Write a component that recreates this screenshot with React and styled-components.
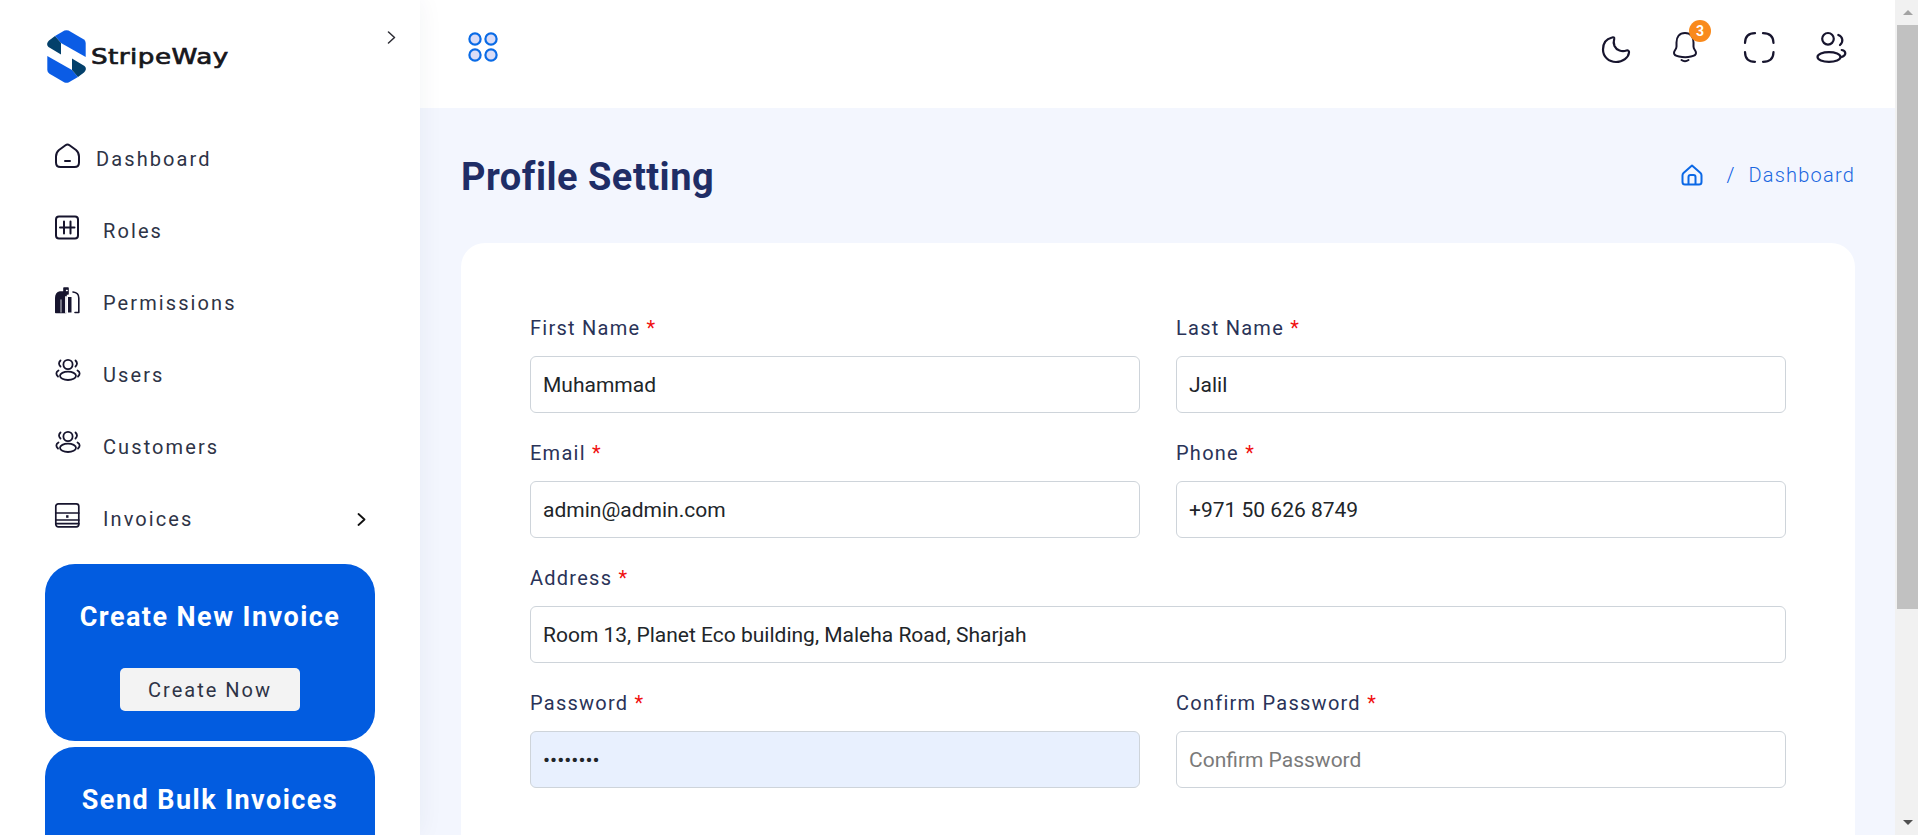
import React from "react";
import styled, { createGlobalStyle } from "styled-components";

const GlobalStyle = createGlobalStyle`
  html, body { margin: 0; padding: 0; height: 100%; overflow: hidden; background: #fff; }
  * { box-sizing: border-box; }
  body { font-family: Roboto, "Liberation Sans", sans-serif; }
`;

const Page = styled.div`
  display: flex;
  width: 1918px;
  height: 835px;
  overflow: hidden;
`;

const Sidebar = styled.aside`
  flex: 0 0 420px;
  height: 835px;
  background: #fff;
  box-shadow: 0 0 24px rgba(40, 50, 90, 0.06);
  position: relative;
  z-index: 2;
  overflow: hidden;
`;

const LogoRow = styled.div`
  display: flex;
  justify-content: space-between;
  height: 123px;
  padding: 30px 24px 0 47px;
`;

const Logo = styled.div`
  display: flex;
  align-items: flex-start;
  gap: 5px;
`;

const LogoText = styled.span`
  font-family: "DejaVu Sans", sans-serif;
  font-weight: 400;
  font-size: 21px;
  line-height: 24px;
  margin-top: 15px;
  color: #17171c;
  letter-spacing: 0.4px;
  -webkit-text-stroke: 0.7px #17171c;
  display: inline-block;
  transform: scaleX(1.245);
  transform-origin: left center;
`;

const Collapse = styled.span`
  display: block;
  margin-top: 1px;
`;

const Nav = styled.nav`
  display: flex;
  flex-direction: column;
  padding: 0 54px 0 55px;
`;

const NavItem = styled.a`
  display: flex;
  align-items: center;
  height: 72px;
  gap: ${(p) => p.$gap || 24}px;
  color: #2e3346;
  font-size: 20px;
  letter-spacing: 2.1px;
`;

const NavIcon = styled.span`
  display: block;
  width: 24px;
  height: 26px;
  margin-bottom: 6px;
  flex: none;
`;

const NavLabel = styled.span`
  flex: 1;
`;

const Promo = styled.div`
  margin: ${(p) => p.$top}px 0 0 45px;
  width: 330px;
  height: 177px;
  border-radius: 30px;
  background: #025ce0;
  padding-top: 37px;
  display: flex;
  flex-direction: column;
  align-items: center;
`;

const PromoTitle = styled.div`
  color: #fff;
  font-weight: 700;
  font-size: 27px;
  line-height: 32px;
  letter-spacing: 1.45px;
`;

const PromoButton = styled.button`
  margin-top: 35px;
  width: 180px;
  height: 43px;
  border: 0;
  border-radius: 5px;
  background: #f3f3f3;
  color: #2e3346;
  font-family: inherit;
  font-size: 20px;
  letter-spacing: 2px;
`;

const Main = styled.main`
  flex: 1;
  height: 835px;
  background: #f3f6fe;
  overflow: hidden;
`;

const Topbar = styled.header`
  height: 108px;
  background: #fff;
  display: flex;
  align-items: flex-start;
  justify-content: space-between;
  padding: 32px 48px 0 48px;
`;

const TopActions = styled.div`
  display: flex;
  align-items: flex-start;
  gap: 40px;
`;

const TopAction = styled.span`
  position: relative;
  display: block;
  width: 32px;
  height: 32px;
`;

const Badge = styled.span`
  position: absolute;
  top: -12px;
  left: 18px;
  width: 22px;
  height: 22px;
  border-radius: 50%;
  background: #f98a1c;
  color: #fff;
  font-size: 14px;
  font-weight: 700;
  line-height: 22px;
  text-align: center;
`;

const Content = styled.div`
  padding: 0 40px 0 41px;
`;

const TitleRow = styled.div`
  height: 135px;
  display: flex;
  align-items: flex-start;
  justify-content: space-between;
`;

const Title = styled.h1`
  margin: 46px 0 0;
  font-size: 38px;
  line-height: 46px;
  font-weight: 700;
  color: #1f2d66;
  letter-spacing: 0.5px;
`;

const Crumbs = styled.div`
  display: flex;
  align-items: center;
  margin-top: 55px;
  color: #1a66e0;
  font-size: 20px;
  font-weight: 300;
  letter-spacing: 1.2px;
  line-height: 24px;
`;

const CrumbSep = styled.span`
  margin: 0 13px 0 23px;
  color: #0b5ce5;
`;

const Card = styled.section`
  background: #fff;
  border-radius: 24px;
  padding: 71px 69px 80px;
  height: 700px;
`;

const Form = styled.form`
  display: grid;
  grid-template-columns: 610px 610px;
  column-gap: 36px;
  row-gap: 26px;
`;

const Field = styled.div`
  grid-column: ${(p) => (p.$wide ? "1 / -1" : "auto")};
`;

const Label = styled.label`
  display: block;
  height: 29px;
  margin-bottom: 13px;
  font-size: 20px;
  line-height: 29px;
  letter-spacing: 1.25px;
  color: #2a3358;
  font-weight: 400;
`;

const Req = styled.span`
  color: #f01010;
`;

const Input = styled.input`
  display: block;
  width: 100%;
  height: 57px;
  padding: 0 12px;
  border: 1px solid #ced4da;
  border-radius: 6px;
  background: ${(p) => (p.$filled ? "#e8f0fe" : "#fff")};
  color: #212529;
  font-family: Roboto, sans-serif;
  font-size: 21px;
  outline: none;
  &::placeholder { color: #7a7a7a; opacity: 1; }
`;

const Scrollbar = styled.div`
  flex: 0 0 23px;
  height: 835px;
  background: #f1f1f1;
  display: flex;
  flex-direction: column;
  padding-left: 2px;
`;

const ScrollArrow = styled.div`
  height: 25px;
  display: flex;
  align-items: center;
  justify-content: center;
  &::after {
    content: "";
    width: 0;
    height: 0;
    border-left: 5px solid transparent;
    border-right: 5px solid transparent;
    ${(p) => (p.$down ? "border-top: 5px solid #505050;" : "border-bottom: 5px solid #a3a3a3;")}
  }
`;

const ScrollThumb = styled.div`
  height: 584px;
  background: #c1c1c1;
`;

const ScrollTrack = styled.div`
  flex: 1;
`;

const Svg = ({ size = 24, h, vb, children, sw = 2, color = "#17152e" }) => (
  <svg
    width={size}
    height={h || size}
    viewBox={vb || `0 0 ${size} ${h || size}`}
    fill="none"
    stroke={color}
    strokeWidth={sw}
    strokeLinecap="round"
    strokeLinejoin="round"
    style={{ display: "block", overflow: "visible" }}
  >
    {children}
  </svg>
);

const LogoMark = () => (
  <svg width="39" height="53" viewBox="0 0 39 53" style={{ display: "block", flex: "none" }}>
    <path d="M8 6 17.5 .6Q19.5 -.3 21.5 .6L36.5 9.2Q38.7 10.5 38.7 13V27L14 13Z" fill="#0b5ce5" />
    <path d="M8 6 14 13V24.5L1.5 17Q-.2 15.5 .2 13.5.5 12 2 10.5Z" fill="#03406b" />
    <path d="M31 47 21.5 52.4Q19.5 53.3 17.5 52.4L2.5 43.8Q.3 42.5 .3 40V26L25 40Z" fill="#0b5ce5" />
    <path d="M31 47 25 40V28.5L37.5 36Q39.2 37.5 38.8 39.5 38.5 41 37 42.5Z" fill="#03406b" />
  </svg>
);

const Chevron = ({ w = 9, h = 13, color = "#2c2c34", sw = 1.5 }) => (
  <svg width={w} height={h} viewBox="0 0 9 13" fill="none" stroke={color} strokeWidth={sw} strokeLinecap="round" strokeLinejoin="round" style={{ display: "block", flex: "none" }}>
    <path d="M1.5 1 7.5 6.5 1.5 12" />
  </svg>
);

const DashIcon = () => (
  <Svg size={26} sw={2}>
    <path d="M10.5 2.2Q12.5 .8 14.5 2.2L21 7Q24 9.5 24 13.5V19.5Q24 24 19.5 24H5.5Q1 24 1 19.5V13.5Q1 9.5 4 7Z" />
    <path d="M10 18H15" />
  </Svg>
);

const RolesIcon = () => (
  <Svg size={26} sw={2}>
    <rect x="1" y="1.5" width="22" height="22" rx="3" />
    <path d="M9 6.5V18.5M15.5 6.5V18.5M5 12.5H19.5" />
  </Svg>
);

const PermIcon = () => (
  <Svg size={26} sw={1.6}>
    <path d="M.8 25.5V11Q.8 6 5 5H11V25.5Z" fill="#17152e" />
    <rect x="9" y="1" width="4" height="6" fill="#17152e" />
    <path d="M13 10H16.5V25.5H13Z" fill="#17152e" stroke="none" />
    <path d="M11.5 3.5H12.2" stroke="#fff" strokeWidth="1.4" />
    <path d="M6 13V25" stroke="#8a8a96" strokeWidth="1.6" />
    <path d="M11 10V25.5" stroke="#fff" strokeWidth="1.8" />
    <path d="M18 5Q23.8 5.5 23.8 11V25.5H20" />
  </Svg>
);

const PeopleIcon = () => (
  <Svg size={27} h={22} vb="1 0 27 22" sw={1.8}>
    <circle cx="14" cy="5.5" r="4.6" />
    <ellipse cx="14" cy="16.8" rx="8" ry="4.2" />
    <path d="M6.5 1.5Q3.5 4.5 6.5 7.5M21.5 1.5Q24.5 4.5 21.5 7.5M4.5 11.5Q.5 14 4 17.5M23.5 11.5Q27.5 14 24 17.5" />
  </Svg>
);

const InvoiceIcon = () => (
  <Svg size={25} h={24} sw={1.7}>
    <rect x=".8" y=".8" width="23" height="23" rx="2.5" />
    <path d="M.8 10H23.8M.8 17H23.8M.8 20.7H23.8" />
    <path d="M12.3 12.2V14.8" strokeWidth="2.4" strokeLinecap="butt" />
  </Svg>
);

const NAV = [
  { label: "Dashboard", Icon: DashIcon, gap: 17 },
  { label: "Roles", Icon: RolesIcon },
  { label: "Permissions", Icon: PermIcon },
  { label: "Users", Icon: PeopleIcon },
  { label: "Customers", Icon: PeopleIcon },
  { label: "Invoices", Icon: InvoiceIcon, more: true },
];

const App = () => {
  return (
    <>
      <GlobalStyle />
      <Page>
        <Sidebar>
          <LogoRow>
            <Logo>
              <LogoMark />
              <LogoText>StripeWay</LogoText>
            </Logo>
            <Collapse>
              <Chevron />
            </Collapse>
          </LogoRow>
          <Nav>
            {NAV.map(({ label, Icon, gap, more }) => (
              <NavItem key={label} $gap={gap}>
                <NavIcon>
                  <Icon />
                </NavIcon>
                <NavLabel>{label}</NavLabel>
                {more && <Chevron color="#111" sw={1.8} />}
              </NavItem>
            ))}
          </Nav>
          <Promo $top={9}>
            <PromoTitle>Create New Invoice</PromoTitle>
            <PromoButton type="button">Create Now</PromoButton>
          </Promo>
          <Promo $top={6}>
            <PromoTitle>Send Bulk Invoices</PromoTitle>
          </Promo>
        </Sidebar>
        <Main>
          <Topbar>
            <svg width="30" height="30" viewBox="0 0 30 30" style={{ display: "block" }} fill="#d9dcf7" stroke="#0a6be6" strokeWidth="2.2">
              <circle cx="7" cy="7" r="5.6" />
              <circle cx="23" cy="7" r="5.6" />
              <circle cx="7" cy="23" r="5.6" />
              <circle cx="23" cy="23" r="5.6" />
            </svg>
            <TopActions>
              <TopAction>
                <Svg size={32} sw={2.2}>
                  <path d="M13 5.5C6.5 7 4 12 4 17.5 4 25 10 30 17 30 24 30 29.5 25.5 30 20.5 30.3 19 29 18 27.5 18.5 23 20 17.5 18.5 15.5 14 14.5 11.5 14.7 8.5 15.2 7 15.5 5.5 14.5 5 13 5.5Z" />
                </Svg>
              </TopAction>
              <TopAction>
                <Svg size={32} sw={2}>
                  <path d="M14 1C8 1 5.5 5.5 5.5 10.5V14.5C5.5 17.5 3 18.5 3 21 3 23 5 24 8 24.5 12 25.3 16.5 25.3 20 24.5 23 24 25 23 25 21 25 18.5 22.5 17.5 22.5 14.5V10.5C22.5 5.5 20 1 14 1Z" />
                  <path d="M10.5 28Q14 30.5 17.5 28" />
                </Svg>
                <Badge>3</Badge>
              </TopAction>
              <TopAction>
                <Svg size={32} sw={2.2}>
                  <path d="M12 1.2Q2.2 1.2 2 11M20 1.2Q30.3 1.2 30.5 11M12 29.8Q2.2 29.8 2 20M20 29.8Q30.3 29.8 30.5 20" />
                </Svg>
              </TopAction>
              <TopAction>
                <Svg size={32} sw={2.2}>
                  <circle cx="13" cy="6.8" r="5.8" />
                  <ellipse cx="14" cy="25" rx="11.5" ry="4.8" />
                  <path d="M23.3 3C27.5 4.5 29 9.5 25 13M26.7 18C31.5 19 31.5 23.5 26.7 25" />
                </Svg>
              </TopAction>
            </TopActions>
          </Topbar>
          <Content>
            <TitleRow>
              <Title>Profile Setting</Title>
              <Crumbs>
                <Svg size={22} sw={2} color="#0b68e6">
                  <path d="M11 1.5 2.5 9Q1.5 10 1.5 11.5V18Q1.5 20.5 4 20.5H18Q20.5 20.5 20.5 18V11.5Q20.5 10 19.5 9Z" />
                  <path d="M7.5 20V13Q7.5 11 9.5 11H12.5Q14.5 11 14.5 13V20" />
                </Svg>
                <CrumbSep>/</CrumbSep>
                Dashboard
              </Crumbs>
            </TitleRow>
            <Card>
              <Form onSubmit={(e) => e.preventDefault()}>
                <Field>
                  <Label>First Name <Req>*</Req></Label>
                  <Input type="text" defaultValue="Muhammad" />
                </Field>
                <Field>
                  <Label>Last Name <Req>*</Req></Label>
                  <Input type="text" defaultValue="Jalil" />
                </Field>
                <Field>
                  <Label>Email <Req>*</Req></Label>
                  <Input type="email" defaultValue="admin@admin.com" />
                </Field>
                <Field>
                  <Label>Phone <Req>*</Req></Label>
                  <Input type="text" defaultValue="+971 50 626 8749" />
                </Field>
                <Field $wide>
                  <Label>Address <Req>*</Req></Label>
                  <Input type="text" defaultValue="Room 13, Planet Eco building, Maleha Road, Sharjah" />
                </Field>
                <Field>
                  <Label>Password <Req>*</Req></Label>
                  <Input type="password" defaultValue="password" $filled />
                </Field>
                <Field>
                  <Label>Confirm Password <Req>*</Req></Label>
                  <Input type="password" placeholder="Confirm Password" />
                </Field>
              </Form>
            </Card>
          </Content>
        </Main>
        <Scrollbar>
          <ScrollArrow />
          <ScrollThumb />
          <ScrollTrack />
          <ScrollArrow $down />
        </Scrollbar>
      </Page>
    </>
  );
};

export default App;
